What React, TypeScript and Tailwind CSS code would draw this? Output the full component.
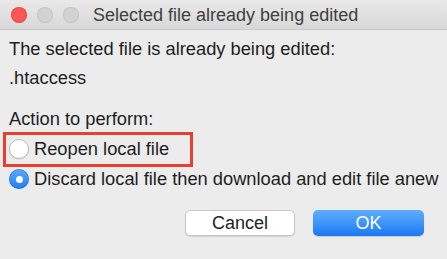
import { useState } from 'react'

const font = { fontFamily: "'Liberation Sans', Arial, sans-serif" }

function Radio({ checked }: { checked: boolean }) {
  return checked ? (
    <span className="flex h-[20px] w-[20px] shrink-0 items-center justify-center rounded-full bg-gradient-to-b from-[#5aa9fb] to-[#1f7ff4] shadow-[inset_0_0_0_1px_rgba(0,60,160,0.25)]">
      <span className="h-[7px] w-[7px] rounded-full bg-white" />
    </span>
  ) : (
    <span className="h-[20px] w-[20px] shrink-0 rounded-full border border-[#b8b8b8] bg-white shadow-[0_1px_1px_rgba(0,0,0,0.08)]" />
  )
}

export default function App() {
  const [choice, setChoice] = useState<'reopen' | 'discard'>('discard')

  return (
    <div className="flex h-[259px] w-[447px] flex-col overflow-hidden bg-[#ececec] text-[#1e1e1e]" style={font}>
      {/* ── Title bar ── */}
      <div className="relative flex h-[30px] shrink-0 items-center border-b border-[#c9c9c9] bg-gradient-to-b from-[#e9e9e9] to-[#d8d8d8] pl-[11px]">
        <div className="flex items-center gap-[10px]">
          <span className="h-[16px] w-[16px] rounded-full bg-[#fc5753] shadow-[inset_0_0_0_1px_rgba(200,40,40,0.35)]" />
          <span className="h-[16px] w-[16px] rounded-full bg-[#d3d3d3] shadow-[inset_0_0_0_1px_rgba(0,0,0,0.08)]" />
          <span className="h-[16px] w-[16px] rounded-full bg-[#d3d3d3] shadow-[inset_0_0_0_1px_rgba(0,0,0,0.08)]" />
        </div>
        <span className="ml-[14px] text-[18px] leading-none text-[#3f3f3f]">Selected file already being edited</span>
      </div>

      {/* ── Body ── */}
      <div className="flex flex-1 flex-col pl-[9px] pr-[23px] pt-[7px] text-[18.3px] leading-[24px]">
        <div className="h-[24px]">The selected file is already being edited:</div>
        <div className="mt-[5px] h-[24px]">.htaccess</div>
        <div className="mt-[17px] h-[24px]">Action to perform:</div>

        <div className="-ml-[6px] mt-px w-[190px] border-[3px] border-[#e8402f] pb-[3px] pl-[3px] pt-[2px]">
          <button onClick={() => setChoice('reopen')} className="flex h-[24px] items-center gap-[5px]">
            <Radio checked={choice === 'reopen'} />
            <span>Reopen local file</span>
          </button>
        </div>

        <button onClick={() => setChoice('discard')} className="flex h-[24px] items-center gap-[5px] whitespace-nowrap">
          <Radio checked={choice === 'discard'} />
          <span>Discard local file then download and edit file anew</span>
        </button>

        <div className="mt-[19px] flex justify-end gap-[18px]">
          <button className="h-[26px] w-[110px] rounded-[5px] border border-[#c6c6c6] bg-white text-[18px] leading-none text-[#222] shadow-[0_1px_1px_rgba(0,0,0,0.1)]">
            Cancel
          </button>
          <button className="h-[26px] w-[111px] rounded-[5px] bg-gradient-to-b from-[#5eaefc] to-[#1a78f3] text-[18px] leading-none text-white shadow-[0_1px_1px_rgba(0,0,0,0.15)]">
            OK
          </button>
        </div>
      </div>
    </div>
  )
}
